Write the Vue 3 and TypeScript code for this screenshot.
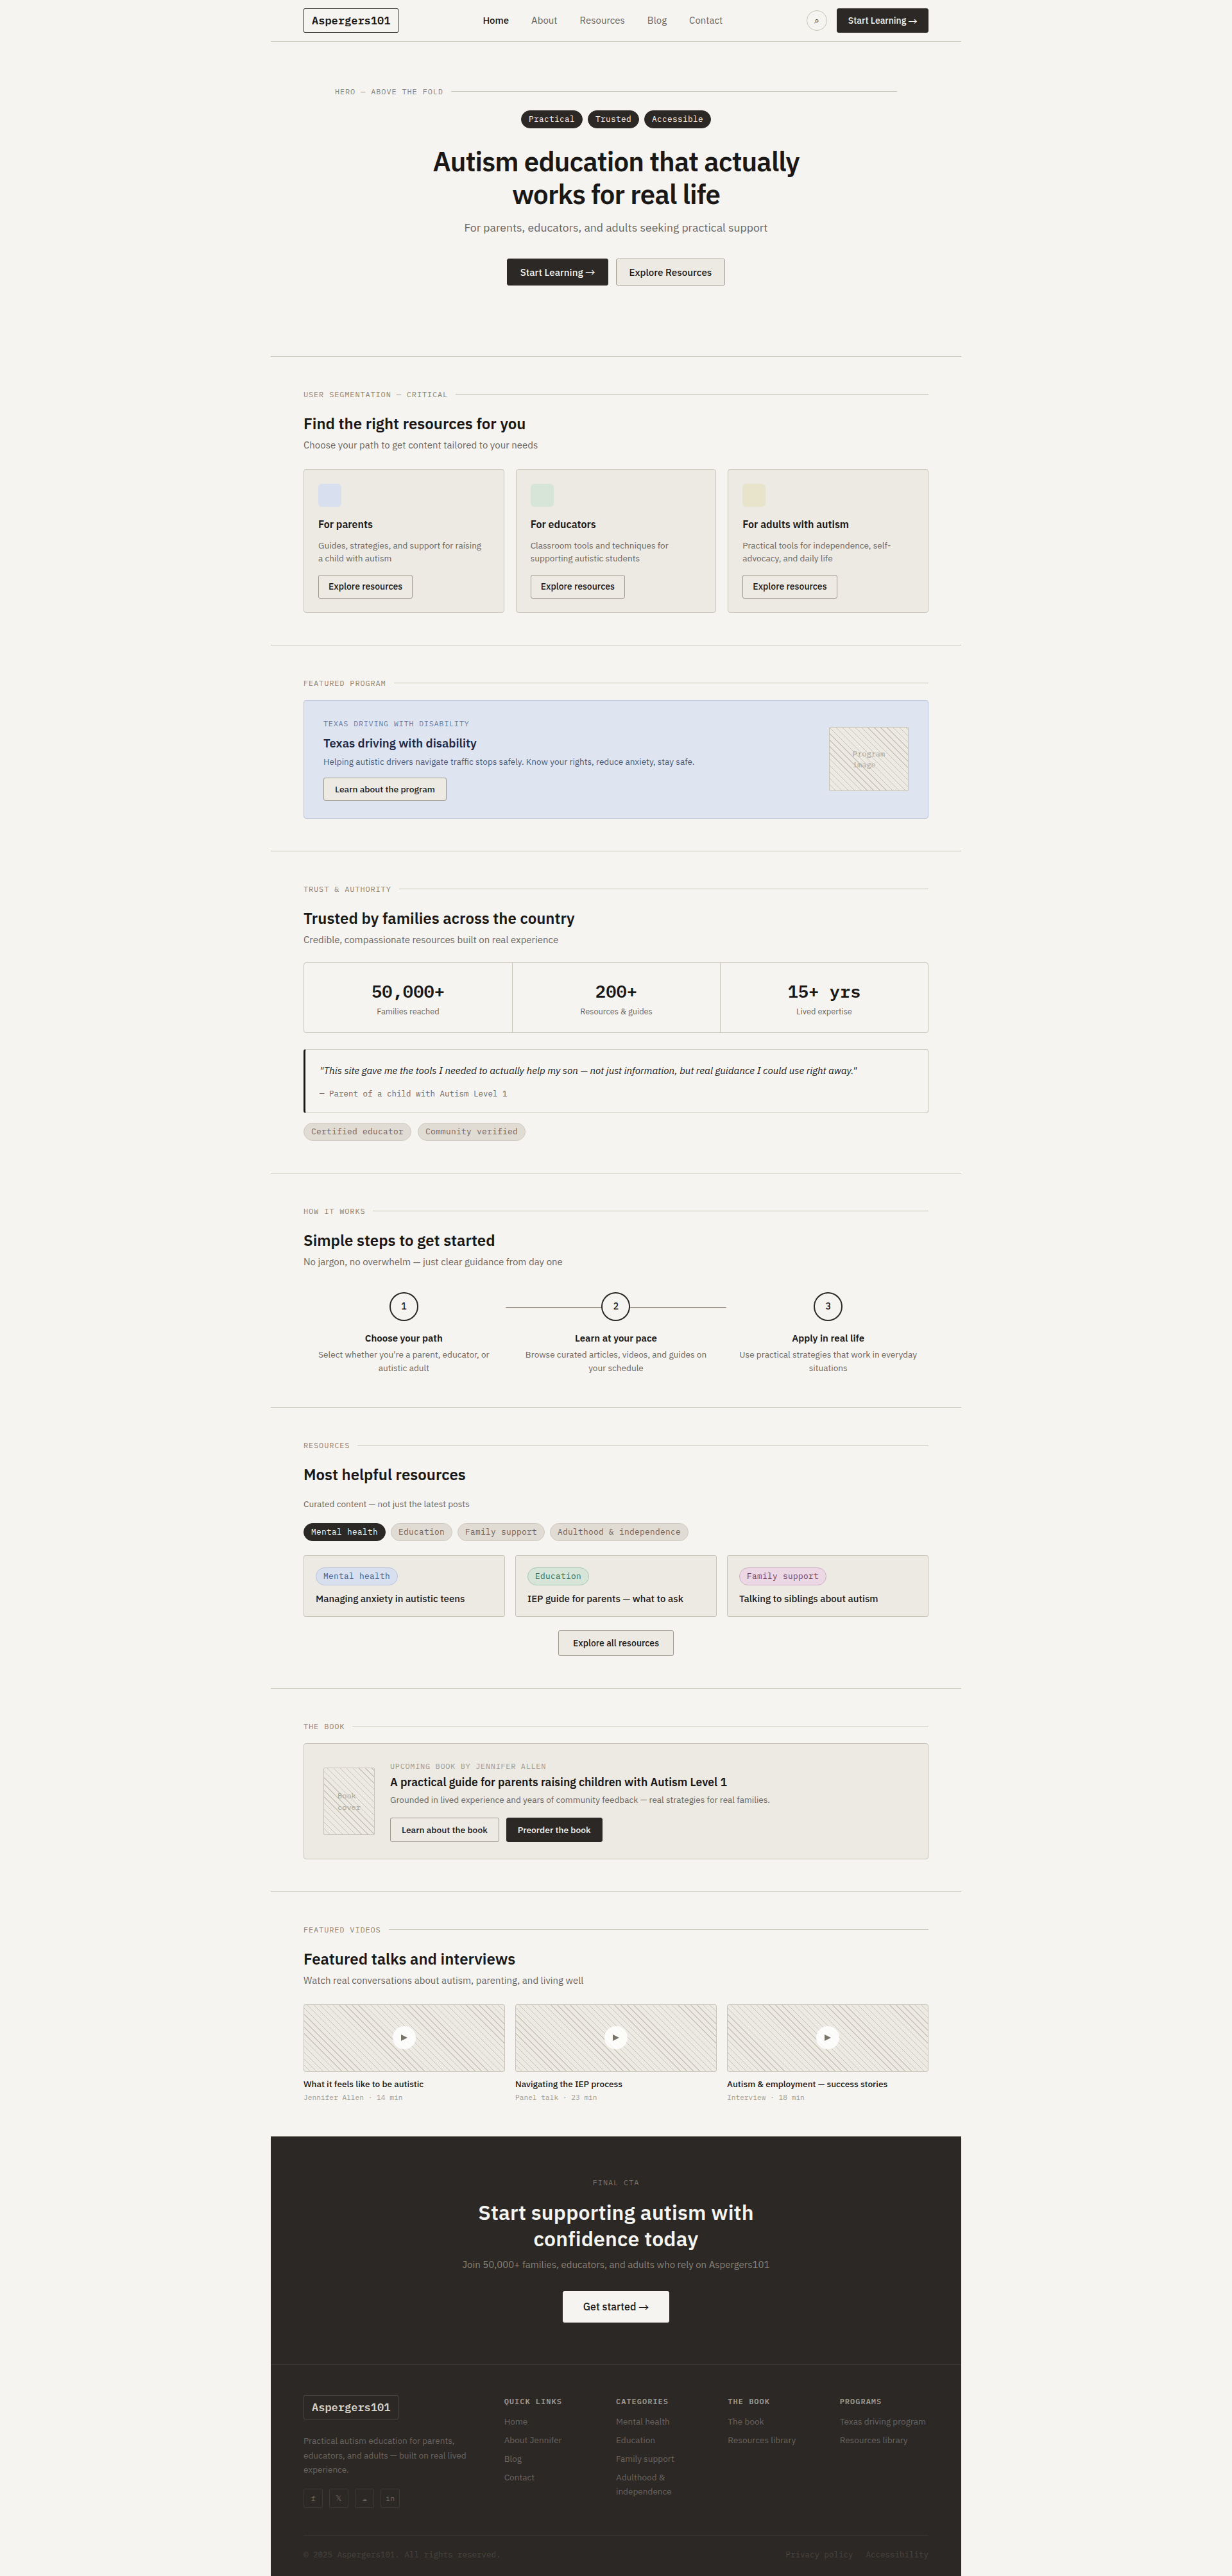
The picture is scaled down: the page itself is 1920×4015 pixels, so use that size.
<script setup lang="ts">
interface Seg { title: string; desc: string; tone: string }
const navLinks: string[] = ['Home', 'About', 'Resources', 'Blog', 'Contact']
const badges: string[] = ['Practical', 'Trusted', 'Accessible']
const segments: Seg[] = [
  { title: 'For parents', desc: 'Guides, strategies, and support for raising a child with autism', tone: 'blue' },
  { title: 'For educators', desc: 'Classroom tools and techniques for supporting autistic students', tone: 'green' },
  { title: 'For adults with autism', desc: 'Practical tools for independence, self-advocacy, and daily life', tone: 'yellow' }
]
const stats = [
  { num: '50,000+', label: 'Families reached' },
  { num: '200+', label: 'Resources & guides' },
  { num: '15+ yrs', label: 'Lived expertise' }
]
const steps = [
  { n: '1', title: 'Choose your path', desc: "Select whether you're a parent, educator, or autistic adult" },
  { n: '2', title: 'Learn at your pace', desc: 'Browse curated articles, videos, and guides on your schedule' },
  { n: '3', title: 'Apply in real life', desc: 'Use practical strategies that work in everyday situations' }
]
const filters: string[] = ['Mental health', 'Education', 'Family support', 'Adulthood & independence']
const posts = [
  { tag: 'Mental health', tone: 'blue', title: 'Managing anxiety in autistic teens' },
  { tag: 'Education', tone: 'green', title: 'IEP guide for parents — what to ask' },
  { tag: 'Family support', tone: 'pink', title: 'Talking to siblings about autism' }
]
const videos = [
  { title: 'What it feels like to be autistic', meta: 'Jennifer Allen · 14 min' },
  { title: 'Navigating the IEP process', meta: 'Panel talk · 23 min' },
  { title: 'Autism & employment — success stories', meta: 'Interview · 18 min' }
]
const socials: string[] = ['f', '𝕏', '☁', 'in']
const footerCols = [
  { head: 'Quick links', links: ['Home', 'About Jennifer', 'Blog', 'Contact'] },
  { head: 'Categories', links: ['Mental health', 'Education', 'Family support', 'Adulthood & independence'] },
  { head: 'The book', links: ['The book', 'Resources library'] },
  { head: 'Programs', links: ['Texas driving program', 'Resources library'] }
]
</script>

<template>
  <div class="shell">
    <header class="nav">
      <div class="logo">Aspergers101</div>
      <nav class="nav-links">
        <a v-for="(l, i) in navLinks" :key="l" class="nav-link" :class="{ active: i === 0 }">{{ l }}</a>
      </nav>
      <div class="nav-right">
        <span class="search">⌕</span>
        <a class="btn btn-dark btn-nav">Start Learning <span class="arrow">→</span></a>
      </div>
    </header>

    <section class="hero">
      <div class="label"><span>HERO — ABOVE THE FOLD</span><i></i></div>
      <div class="badges">
        <span v-for="b in badges" :key="b" class="pill pill-dark">{{ b }}</span>
      </div>
      <h1>Autism education that actually<br />works for real life</h1>
      <p class="hero-sub">For parents, educators, and adults seeking practical support</p>
      <div class="hero-actions">
        <a class="btn btn-dark btn-lg">Start Learning <span class="arrow">→</span></a>
        <a class="btn btn-soft btn-lg">Explore Resources</a>
      </div>
    </section>

    <section class="section">
      <div class="label"><span>USER SEGMENTATION — CRITICAL</span><i></i></div>
      <h2>Find the right resources for you</h2>
      <p class="sub">Choose your path to get content tailored to your needs</p>
      <div class="grid3 grid-seg">
        <article v-for="s in segments" :key="s.title" class="seg-card">
          <div class="seg-icon" :class="s.tone"></div>
          <h3>{{ s.title }}</h3>
          <p>{{ s.desc }}</p>
          <a class="btn btn-outline btn-sm">Explore resources</a>
        </article>
      </div>
    </section>

    <section class="section">
      <div class="label"><span>FEATURED PROGRAM</span><i></i></div>
      <div class="program">
        <div>
          <div class="program-over">TEXAS DRIVING WITH DISABILITY</div>
          <h3>Texas driving with disability</h3>
          <p>Helping autistic drivers navigate traffic stops safely. Know your rights, reduce anxiety, stay safe.</p>
          <a class="btn btn-soft btn-program">Learn about the program</a>
        </div>
        <div class="hatch program-img"><span>Program<br />image</span></div>
      </div>
    </section>

    <section class="section">
      <div class="label"><span>TRUST &amp; AUTHORITY</span><i></i></div>
      <h2>Trusted by families across the country</h2>
      <p class="sub">Credible, compassionate resources built on real experience</p>
      <div class="stats">
        <div v-for="s in stats" :key="s.num" class="stat">
          <div class="stat-num">{{ s.num }}</div>
          <div class="stat-label">{{ s.label }}</div>
        </div>
      </div>
      <blockquote class="quote">
        <p>"This site gave me the tools I needed to actually help my son — not just information, but real guidance I could use right away."</p>
        <footer>— Parent of a child with Autism Level 1</footer>
      </blockquote>
      <div class="pills">
        <span class="pill pill-muted">Certified educator</span>
        <span class="pill pill-muted">Community verified</span>
      </div>
    </section>

    <section class="section">
      <div class="label"><span>HOW IT WORKS</span><i></i></div>
      <h2>Simple steps to get started</h2>
      <p class="sub sub-how">No jargon, no overwhelm — just clear guidance from day one</p>
      <div class="grid3 steps">
        <div v-for="(s, i) in steps" :key="s.n" class="step" :class="{ connected: i === 1 }">
          <div class="step-num">{{ s.n }}</div>
          <h4>{{ s.title }}</h4>
          <p>{{ s.desc }}</p>
        </div>
      </div>
    </section>

    <section class="section">
      <div class="label"><span>RESOURCES</span><i></i></div>
      <h2 class="h2-res">Most helpful resources</h2>
      <p class="sub sub-res">Curated content — not just the latest posts</p>
      <div class="pills filters">
        <span v-for="(f, i) in filters" :key="f" class="pill" :class="i === 0 ? 'pill-dark' : 'pill-muted'">{{ f }}</span>
      </div>
      <div class="grid3 posts">
        <article v-for="p in posts" :key="p.title" class="post">
          <span class="pill" :class="'tag-' + p.tone">{{ p.tag }}</span>
          <h4>{{ p.title }}</h4>
        </article>
      </div>
      <div class="center-row">
        <a class="btn btn-soft btn-all">Explore all resources</a>
      </div>
    </section>

    <section class="section">
      <div class="label"><span>THE BOOK</span><i></i></div>
      <div class="book">
        <div class="hatch book-cover"><span>Book<br />cover</span></div>
        <div class="book-body">
          <div class="book-over">UPCOMING BOOK BY JENNIFER ALLEN</div>
          <h3>A practical guide for parents raising children with Autism Level 1</h3>
          <p>Grounded in lived experience and years of community feedback — real strategies for real families.</p>
          <div class="book-actions">
            <a class="btn btn-outline btn-book">Learn about the book</a>
            <a class="btn btn-dark btn-book">Preorder the book</a>
          </div>
        </div>
      </div>
    </section>

    <section class="section">
      <div class="label"><span>FEATURED VIDEOS</span><i></i></div>
      <h2>Featured talks and interviews</h2>
      <p class="sub">Watch real conversations about autism, parenting, and living well</p>
      <div class="grid3 videos">
        <article v-for="v in videos" :key="v.title" class="video">
          <div class="hatch thumb">
            <span class="play">
              <svg width="10" height="10" viewBox="0 0 10 10"><polygon points="0,0 10,5 0,10" fill="#7a7468" /></svg>
            </span>
          </div>
          <h4>{{ v.title }}</h4>
          <div class="video-meta">{{ v.meta }}</div>
        </article>
      </div>
    </section>

    <section class="cta">
      <div class="cta-label">FINAL CTA</div>
      <h2>Start supporting autism with<br />confidence today</h2>
      <p>Join 50,000+ families, educators, and adults who rely on Aspergers101</p>
      <a class="btn btn-light">Get started <span class="arrow">→</span></a>
    </section>

    <footer class="footer">
      <div class="footer-grid">
        <div class="footer-brand">
          <div class="logo logo-footer">Aspergers101</div>
          <p>Practical autism education for parents, educators, and adults — built on real lived experience.</p>
          <div class="socials">
            <span v-for="s in socials" :key="s" class="social">{{ s }}</span>
          </div>
        </div>
        <div v-for="c in footerCols" :key="c.head" class="footer-col">
          <h5>{{ c.head }}</h5>
          <a v-for="l in c.links" :key="l">{{ l }}</a>
        </div>
      </div>
      <div class="footer-bottom">
        <span>© 2025 Aspergers101. All rights reserved.</span>
        <span class="legal"><a>Privacy policy</a><a>Accessibility</a></span>
      </div>
    </footer>
  </div>
</template>

<style>
html, body { margin: 0; background: #f5f4f0; }
</style>

<style scoped>
.shell {
  --sans: "IBM Plex Sans", Roboto, "Noto Sans", sans-serif;
  --mono: "IBM Plex Mono", "Liberation Mono", monospace;
  --ink: #1a1816;
  --dark: #2c2825;
  --muted: #6b6560;
  --line: #c8c4b8;
  --paper: #eceae3;
  width: 1076px;
  margin: 0 auto;
  font-family: var(--sans);
  font-size: 14px;
  line-height: 1.6;
  color: var(--ink);
  background: #f5f4f0;
}
h1, h2, h3, h4, h5, p, blockquote { margin: 0; }

/* nav */
.nav {
  display: flex;
  align-items: center;
  justify-content: space-between;
  padding: 13px 51px 13px;
  border-bottom: 1px solid var(--line);
}
.logo {
  font-family: var(--mono);
  font-weight: 600;
  font-size: 17px;
  line-height: 26px;
  padding: 5px 12px;
  border: 1px solid var(--dark);
  border-radius: 2px;
}
.nav-links { display: flex; gap: 35px; }
.nav-link { font-size: 15px; color: var(--muted); }
.nav-link.active { color: var(--ink); font-weight: 500; }
.nav-right { display: flex; align-items: center; gap: 15px; }
.search {
  width: 30px;
  height: 30px;
  border: 1px solid var(--line);
  border-radius: 50%;
  display: flex;
  align-items: center;
  justify-content: center;
  font-family: "DejaVu Sans", sans-serif;
  font-size: 14px;
  color: #4a4540;
}

/* buttons */
.btn {
  display: inline-flex;
  align-items: center;
  justify-content: center;
  box-sizing: border-box;
  border: 1px solid transparent;
  border-radius: 3px;
  font-weight: 500;
  white-space: pre;
}
.arrow { font-family: "Noto Sans CJK SC", sans-serif; font-weight: 400; line-height: 1; }
.btn-dark { background: var(--dark); border-color: var(--dark); color: #f5f4f0; }
.btn-soft { background: var(--paper); border-color: #a09a8f; color: var(--ink); }
.btn-outline { background: transparent; border-color: #a09a8f; color: var(--ink); }
.btn-light { background: #f5f4f0; color: var(--ink); height: 49px; padding: 0 31px; font-size: 16px; }
.btn-nav { height: 38px; padding: 0 16.5px; font-size: 14px; }
.btn-lg { height: 42px; padding: 0 19.5px; font-size: 15.2px; }
.btn-sm { height: 37px; padding: 0 15px; font-size: 14px; }
.btn-program { height: 36px; padding: 0 17px; font-size: 13.8px; }
.btn-all { height: 40px; padding: 0 22px; font-size: 14px; }
.btn-book { height: 38px; padding: 0 17px; font-size: 13.8px; }

/* labels */
.label {
  display: flex;
  align-items: center;
  gap: 12px;
  font-family: var(--mono);
  font-size: 12px;
  line-height: 17.6px;
  letter-spacing: 0.84px;
  color: #8a8478;
  white-space: nowrap;
}
.label i { flex: 1; height: 1px; background: var(--line); }

/* pills */
.pill {
  display: inline-block;
  box-sizing: border-box;
  height: 28px;
  padding: 0 11px;
  border: 1px solid transparent;
  border-radius: 14px;
  font-family: var(--mono);
  font-size: 12.8px;
  line-height: 26px;
  letter-spacing: 0.32px;
  white-space: nowrap;
}
.pill-dark { background: var(--dark); border-color: var(--dark); color: #f5f4f0; }
.pill-muted { background: #e0dbd3; border-color: #cfcac0; color: var(--muted); }
.tag-blue { background: #d8dfee; border-color: #b8c4dc; color: #4a5a8a; }
.tag-green { background: #d6e5d8; border-color: #a8c9b0; color: #3a6a4a; }
.tag-pink { background: #ecd8e4; border-color: #d0b0c4; color: #7a3a5a; }

/* hero */
.hero {
  padding: 69px 100px 110px;
  text-align: center;
  border-bottom: 1px solid var(--line);
}
.badges { display: flex; justify-content: center; gap: 8px; margin-top: 20.4px; }
h1 {
  margin-top: 26px;
  font-size: 42px;
  line-height: 51px;
  font-weight: 600;
  letter-spacing: -0.84px;
  color: var(--ink);
}
.hero-sub { margin-top: 13px; font-size: 17.6px; line-height: 28px; color: var(--muted); }
.hero-actions { display: flex; justify-content: center; gap: 12px; margin-top: 34px; }

/* sections */
.section { padding: 50px 51px; border-bottom: 1px solid var(--line); }
h2 {
  margin-top: 21.4px;
  font-size: 24px;
  line-height: 31px;
  font-weight: 600;
  color: var(--ink);
}
.sub { margin-top: 6px; font-size: 15px; line-height: 24px; color: var(--muted); }
.sub-how { margin-bottom: 35px; }
.h2-res { margin-bottom: 18.7px; }
.sub-res { margin-top: 0; font-size: 13.6px; line-height: 22px; }
.grid3 { display: grid; grid-template-columns: repeat(3, 1fr); }
.grid-seg { gap: 18px; margin-top: 25px; }

.seg-card {
  padding: 22px 22px 21px;
  background: var(--paper);
  border: 1px solid var(--line);
  border-radius: 4px;
}
.seg-icon { width: 36px; height: 36px; border-radius: 6px; }
.seg-icon.blue { background: #d8dfee; }
.seg-icon.green { background: #d6e5d8; }
.seg-icon.yellow { background: #e8e4cc; }
.seg-card h3 { margin-top: 15px; font-size: 16px; line-height: 24px; font-weight: 600; }
.seg-card p { margin-top: 11px; max-width: 262px; font-size: 13.6px; line-height: 20px; color: var(--muted); }
.seg-card .btn { margin-top: 16px; }

.program {
  display: flex;
  align-items: center;
  justify-content: space-between;
  margin-top: 17.4px;
  padding: 27px 30px;
  background: #dfe5f0;
  border: 1px solid #b8c4d8;
  border-radius: 4px;
}
.program-over {
  font-family: var(--mono);
  font-size: 12px;
  line-height: 18px;
  letter-spacing: 0.64px;
  color: #6b7fa8;
}
.program h3 { margin-top: 9px; font-size: 18.5px; line-height: 24px; font-weight: 600; color: #1e2a4a; }
.program p { margin-top: 7px; font-size: 13.6px; line-height: 20px; color: #4a5a7a; }
.program .btn { margin-top: 15px; }

.hatch {
  background-color: var(--paper);
  background-image: repeating-linear-gradient(45deg, transparent, transparent 6px, #c8c4b8 6px, #c8c4b8 7px);
  border: 1px solid var(--line);
  border-radius: 2px;
  display: flex;
  align-items: center;
  justify-content: center;
  box-sizing: border-box;
  font-family: var(--mono);
  font-size: 12px;
  line-height: 17.4px;
  color: #a8a296;
}
.program-img { width: 124px; height: 100px; }
.book-cover { width: 80px; height: 105px; flex: none; }

.stats {
  display: grid;
  grid-template-columns: repeat(3, 1fr);
  margin-top: 23px;
  border: 1px solid var(--line);
  border-radius: 4px;
}
.stat { padding: 21px 0 22px; text-align: center; }
.stat + .stat { border-left: 1px solid var(--line); }
.stat-num { font-family: var(--mono); font-size: 27.2px; line-height: 45px; font-weight: 600; }
.stat-label { font-size: 12.8px; line-height: 20px; color: var(--muted); }

.quote {
  margin-top: 25px;
  padding: 20px 22px;
  border: 1px solid var(--line);
  border-left: 3px solid var(--ink);
  border-radius: 4px;
}
.quote p { font-size: 15.2px; line-height: 24px; font-style: italic; color: var(--ink); }
.quote footer {
  margin-top: 14px;
  font-family: var(--mono);
  font-size: 12.5px;
  line-height: 20px;
  color: var(--muted);
}
.pills { display: flex; gap: 10px; margin-top: 15px; }
.filters { gap: 8px; margin-top: 19.3px; }

.steps { gap: 18px; }
.step { position: relative; padding: 0 12px; text-align: center; }
.step.connected::before {
  content: "";
  position: absolute;
  top: 23px;
  left: -16px;
  right: -16px;
  height: 2px;
  background: #a09a8f;
}
.step-num {
  position: relative;
  box-sizing: border-box;
  width: 45px;
  height: 45px;
  margin: 0 auto;
  background: #f5f4f0;
  border: 2px solid var(--dark);
  border-radius: 50%;
  font-family: var(--mono);
  font-size: 14px;
  font-weight: 500;
  line-height: 41px;
}
.step h4 { margin-top: 14.6px; font-size: 15px; line-height: 24px; font-weight: 600; }
.step p { margin-top: 3.6px; font-size: 13.6px; line-height: 21px; color: var(--muted); }

.posts { gap: 16px; margin-top: 22.3px; }
.post {
  padding: 18px 18px 15.3px;
  background: var(--paper);
  border: 1px solid var(--line);
  border-radius: 3px;
}
.post .pill { display: block; width: fit-content; }
.post h4 { margin-top: 8.7px; font-size: 15px; line-height: 24px; font-weight: 500; }
.center-row { display: flex; justify-content: center; margin-top: 21px; }

.book {
  display: flex;
  align-items: center;
  gap: 24px;
  margin-top: 17.4px;
  padding: 26px 30px;
  background: var(--paper);
  border: 1px solid var(--line);
  border-radius: 4px;
}
.book-over {
  font-family: var(--mono);
  font-size: 12px;
  line-height: 17.6px;
  letter-spacing: 0.64px;
  color: #a09a8f;
}
.book h3 { margin-top: 4px; font-size: 17.6px; line-height: 24px; font-weight: 600; }
.book p { margin-top: 5px; font-size: 13.6px; line-height: 21px; color: var(--muted); }
.book-actions { display: flex; gap: 11px; margin-top: 17px; }

.videos { gap: 16px; margin-top: 25px; }
.thumb { position: relative; height: 105px; border-radius: 3px; }
.play {
  width: 36px;
  height: 36px;
  display: flex;
  align-items: center;
  justify-content: center;
  background: rgba(255, 255, 255, 0.85);
  border-radius: 50%;
}
.video h4 { margin-top: 8.8px; font-size: 13.6px; line-height: 21px; font-weight: 500; }
.video-meta {
  margin-top: 2.4px;
  font-family: var(--mono);
  font-size: 11.2px;
  line-height: 17.6px;
  color: #a09a8f;
}

/* cta */
.cta { padding: 63.5px 51px 65px; background: var(--dark); text-align: center; }
.cta-label {
  font-family: var(--mono);
  font-size: 12px;
  line-height: 17.6px;
  letter-spacing: 0.84px;
  color: #7a7468;
}
.cta h2 { margin-top: 17px; font-size: 32px; line-height: 41.6px; letter-spacing: 0.15px; color: #f5f4f0; }
.cta p { margin-top: 7px; font-size: 15px; line-height: 24px; color: #8a8478; }
.cta .btn { margin-top: 29px; }

/* footer */
.footer {
  padding: 47px 51px 25px;
  background: var(--dark);
  border-top: 1px solid #3a3632;
  color: #6b6560;
}
.footer-grid { display: grid; grid-template-columns: 2fr 1fr 1fr 1fr 1fr; gap: 36px; padding-bottom: 42px; }
.logo-footer {
  display: inline-block;
  color: #d8d3c8;
  border-color: #4a4540;
}
.footer-brand p { margin-top: 22px; font-size: 13.6px; line-height: 22.6px; }
.socials { display: flex; gap: 10px; margin-top: 18px; }
.social {
  width: 28px;
  height: 28px;
  display: flex;
  align-items: center;
  justify-content: center;
  border: 1px solid #3e3a36;
  border-radius: 3px;
  font-family: var(--mono);
  font-size: 12px;
  color: #6b6560;
}
.footer-col h5 {
  margin-bottom: 12.5px;
  font-family: var(--mono);
  font-size: 12px;
  line-height: 19px;
  letter-spacing: 1px;
  font-weight: 600;
  text-transform: uppercase;
  color: #a09a8f;
}
.footer-col a { display: block; font-size: 13.6px; line-height: 21.8px; margin-bottom: 7px; color: #6b6560; }
.footer-bottom {
  display: flex;
  justify-content: space-between;
  padding-top: 19px;
  border-top: 1px solid #3a3632;
  font-family: var(--mono);
  font-size: 12.5px;
  line-height: 20px;
  color: #4a4540;
}
.legal { display: flex; gap: 20px; }
</style>
